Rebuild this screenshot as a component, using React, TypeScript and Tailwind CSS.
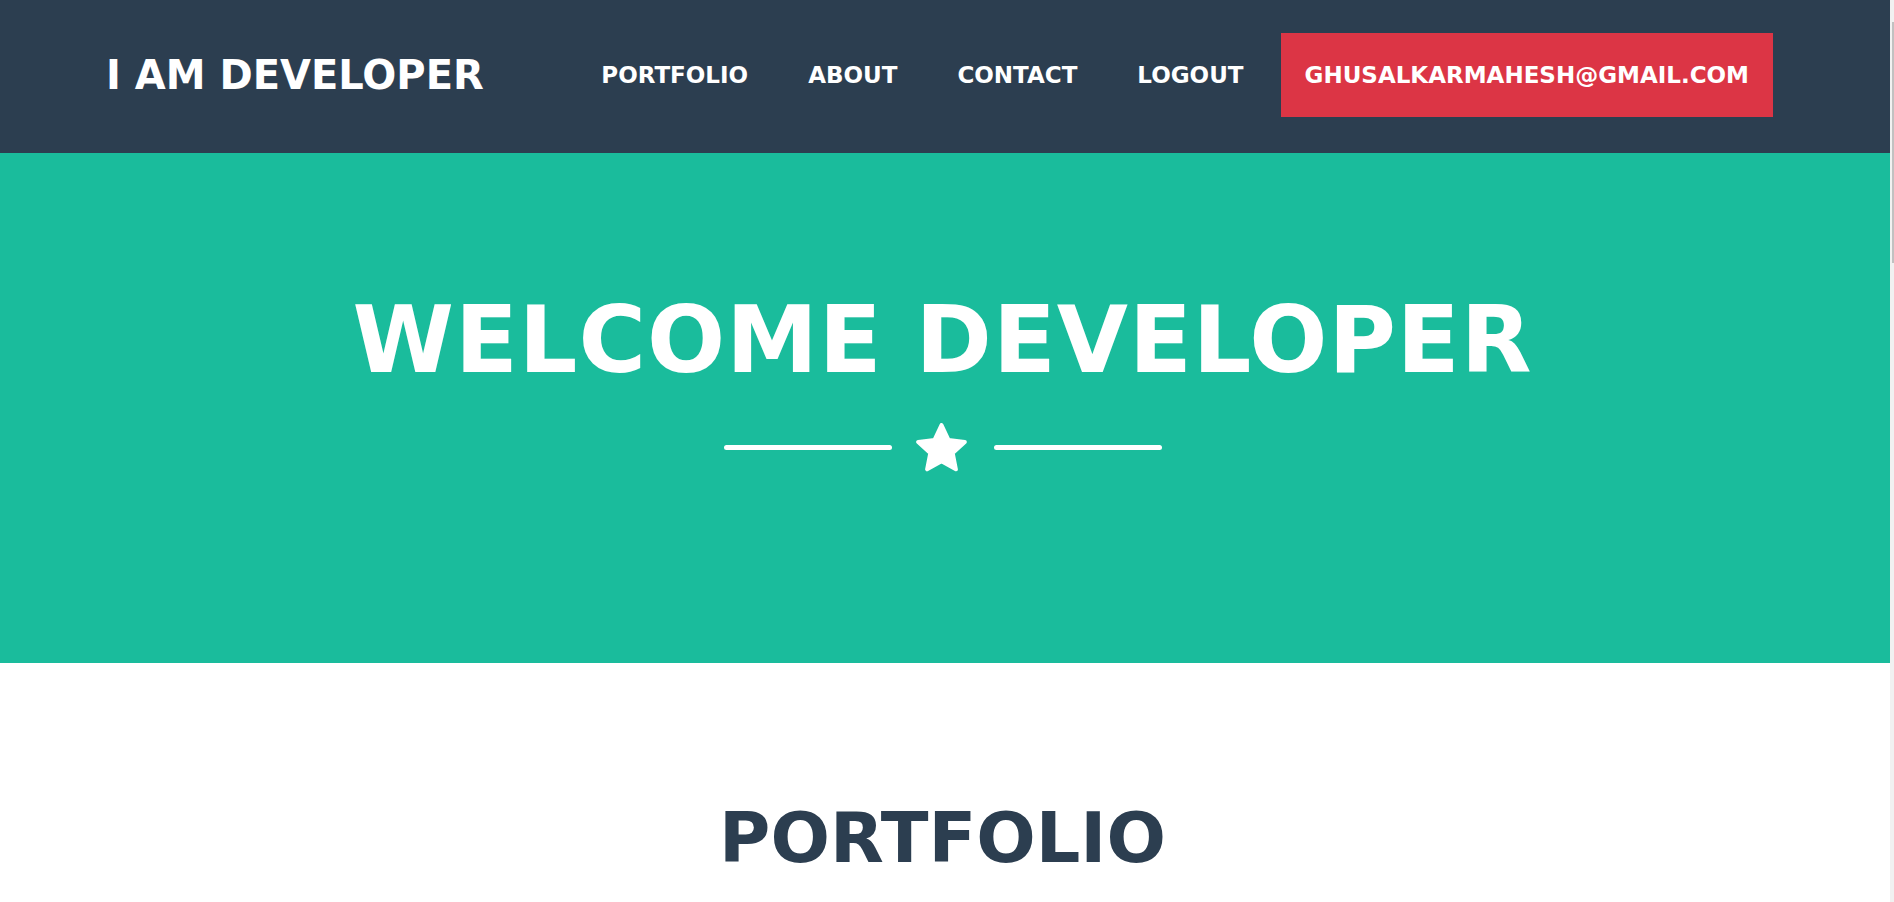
import React from "react";

const font = { fontFamily: "'DejaVu Sans', Inter, sans-serif" };

function Star({ className }: { className?: string }) {
  return (
    <svg viewBox="0 0 51 49" width="51" height="49" className={className}>
      <polygon
        points="25.5,2 32.44,16.95 48.8,18.93 36.72,30.15 39.9,46.32 25.5,38.3 11.1,46.32 14.28,30.15 2.2,18.93 18.56,16.95"
        fill="currentColor"
        stroke="currentColor"
        strokeWidth="4"
        strokeLinejoin="round"
      />
    </svg>
  );
}

function Divider({ dark }: { dark?: boolean }) {
  const c = dark ? "bg-[#2c3e50]" : "bg-white";
  return (
    <div className={`flex items-center justify-center ${dark ? "text-[#2c3e50]" : "text-white"}`}>
      <div className={`h-[5px] w-[168px] rounded-full ${c}`} />
      <Star className="ml-[24px] mr-[27px]" />
      <div className={`h-[5px] w-[168px] rounded-full ${c}`} />
    </div>
  );
}

export default function App() {
  const navItems = ["PORTFOLIO", "ABOUT", "CONTACT", "LOGOUT"];
  return (
    <div style={font} className="h-screen flex bg-white">
      <main className="flex-1 min-w-0 h-screen overflow-y-auto [scrollbar-width:none]">
        <nav className="h-[153px] bg-[#2c3e50] pl-[106px] pr-[117px] pb-[3px] flex items-center justify-between">
          <div className="text-white font-bold text-[40px] leading-none">I AM DEVELOPER</div>
          <div className="flex items-center">
            {navItems.map((t) => (
              <a key={t} className="px-[30px] text-white font-bold text-[23px] leading-none">
                {t}
              </a>
            ))}
            <a className="ml-[7px] h-[84px] px-[24px] flex items-center bg-[#dc3545] text-white font-bold text-[23px] leading-none">
              GHUSALKARMAHESH@GMAIL.COM
            </a>
          </div>
        </nav>

        <header className="bg-[#1abc9c] pt-[142px] pb-[191px] pr-[5px] flex flex-col items-center">
          <h1 className="text-white font-bold text-[92px] leading-none tracking-[1px]">WELCOME DEVELOPER</h1>
          <div className="mt-[36px]">
            <Divider />
          </div>
        </header>

        <section className="pt-[140px] pb-[120px] pr-[5px] flex flex-col items-center">
          <h2 className="text-[#2c3e50] font-bold text-[70px] leading-none">PORTFOLIO</h2>
          <div className="mt-[40px]">
            <Divider dark />
          </div>
          <div className="mt-[80px] grid grid-cols-3 gap-[30px] w-[1400px]">
            {[0, 1, 2, 3, 4, 5].map((i) => (
              <div key={i} className="h-[320px] rounded-md bg-[#e9ecef]" />
            ))}
          </div>
        </section>

        <section className="bg-[#1abc9c] pt-[120px] pb-[120px] flex flex-col items-center">
          <h2 className="text-white font-bold text-[70px] leading-none">ABOUT</h2>
          <div className="mt-[40px]">
            <Divider />
          </div>
          <div className="mt-[60px] w-[1100px] grid grid-cols-2 gap-[40px] text-white text-[22px]">
            <p>A free developer portfolio.</p>
            <p>Built with care.</p>
          </div>
        </section>

        <section className="pt-[120px] pb-[200px] flex flex-col items-center">
          <h2 className="text-[#2c3e50] font-bold text-[70px] leading-none">CONTACT ME</h2>
          <div className="mt-[40px]">
            <Divider dark />
          </div>
        </section>

        <footer className="bg-[#2c3e50] h-[300px]" />
        <div className="bg-[#1a252f] h-[80px]" />
      </main>
      <div className="w-[4px] shrink-0 h-screen bg-[#f1f1f1] flex justify-end">
        <div className="mt-[22px] h-[241px] w-[2px] bg-[#c1c1c1]" />
      </div>
    </div>
  );
}
